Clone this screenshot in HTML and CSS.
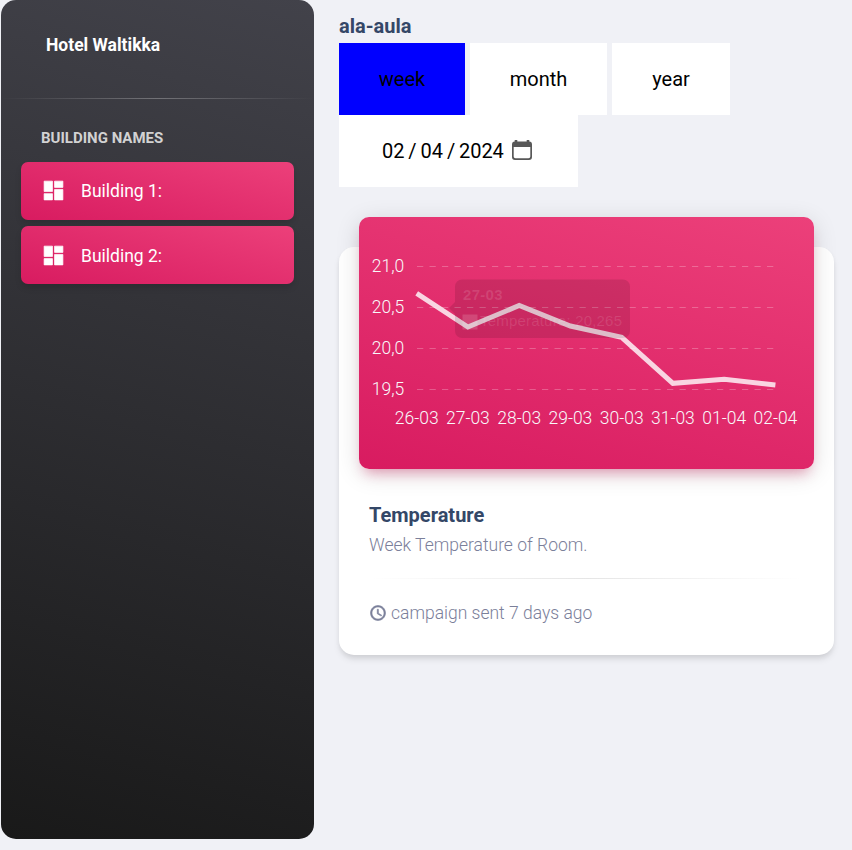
FILE: index.html
```html
<!DOCTYPE html>
<html lang="en">
<head>
<meta charset="utf-8">
<title>Hotel Waltikka</title>
<link rel="stylesheet" href="styles.css">
</head>
<body>
<aside class="sidebar">
  <div class="brand">Hotel Waltikka</div>
  <hr class="rule rule-light">
  <h6 class="nav-title">Building names</h6>
  <nav class="nav">
    <a class="nav-link">
      <svg class="nav-icon" viewBox="0 0 24 24"><path d="M3 13h8V3H3v10zm0 8h8v-6H3v6zm10 0h8V11h-8v10zm0-18v6h8V3h-8z"/></svg>
      <span>Building 1:</span>
    </a>
    <a class="nav-link">
      <svg class="nav-icon" viewBox="0 0 24 24"><path d="M3 13h8V3H3v10zm0 8h8v-6H3v6zm10 0h8V11h-8v10zm0-18v6h8V3h-8z"/></svg>
      <span>Building 2:</span>
    </a>
  </nav>
</aside>
<main class="main">
  <h1 class="room">ala-aula</h1>
  <div class="filters">
    <button class="filter week active">week</button>
    <button class="filter month">month</button>
    <button class="filter year">year</button>
  </div>
  <div class="date">
    <span class="date-text">02&thinsp;/&thinsp;04&thinsp;/&thinsp;2024</span>
    <svg class="date-icon" viewBox="0 0 20 20"><path fill-rule="evenodd" d="M2.700 0h2.600v1.500h9.400V0h2.600v1.500A3 3 0 0 1 20 4.500V17a3 3 0 0 1-3 3H3a3 3 0 0 1-3-3V4.500a3 3 0 0 1 2.700-3zM1.700 7v9.500a1.800 1.800 0 0 0 1.800 1.800h13a1.800 1.800 0 0 0 1.800-1.800V7z"/></svg>
  </div>
  <section class="card">
    <div class="chart">
      <svg width="455" height="252" viewBox="0 0 455 252">
        <g class="grid">
          <path d="M58 49.500H416M58 90.500H416M58 131.500H416M58 172.500H416"/>
        </g>
        <g class="labels y-labels">
          <text x="45.300" y="54.500">21,0</text>
          <text x="45.300" y="95.500">20,5</text>
          <text x="45.300" y="136.500">20,0</text>
          <text x="45.300" y="177.500">19,5</text>
        </g>
        <g class="labels x-labels">
          <text x="57.700" y="207">26-03</text>
          <text x="108.900" y="207">27-03</text>
          <text x="160.200" y="207">28-03</text>
          <text x="211.400" y="207">29-03</text>
          <text x="262.700" y="207">30-03</text>
          <text x="313.900" y="207">31-03</text>
          <text x="365.200" y="207">01-04</text>
          <text x="416.400" y="207">02-04</text>
        </g>
        <polyline class="series" points="57.700,76.300 108.900,110 160.200,88.500 211.400,109 262.700,120.300 313.900,166.300 365.200,162.300 416.400,168"/>
        <g class="tip">
          <path class="tip-box" d="M103 62.500h161a7 7 0 0 1 7 7v44.500a7 7 0 0 1-7 7H103a7 7 0 0 1-7-7V97l-6-6 6-6V69.500a7 7 0 0 1 7-7z"/>
          <rect class="tip-swatch" x="103.500" y="97.500" width="15" height="15"/>
          <text class="tip-title" x="104" y="83" textLength="39.500">27-03</text>
          <text class="tip-text" x="121" y="109" textLength="142">Temperature: 20,265</text>
        </g>
      </svg>
    </div>
    <div class="card-body">
      <h2 class="card-title">Temperature</h2>
      <p class="card-text">Week Temperature of Room.</p>
      <hr class="rule rule-dark">
      <div class="card-foot">
        <svg class="clock" viewBox="0 0 24 24"><path d="M11.990 2C6.470 2 2 6.480 2 12s4.470 10 9.990 10C17.520 22 22 17.520 22 12S17.520 2 11.990 2zM12 20c-4.420 0-8-3.580-8-8s3.580-8 8-8 8 3.580 8 8-3.580 8-8 8zm.5-13H11v6l5.250 3.150.75-1.230-4.500-2.670z"/></svg>
        <span>campaign sent 7 days ago</span>
      </div>
    </div>
  </section>
</main>
</body>
</html>
```
FILE: styles.css
```css
* { box-sizing: border-box; }
body {
  margin: 0;
  height: 850px;
  overflow: hidden;
  display: flex;
  background: #f0f1f6;
  font-family: Roboto, "Liberation Sans", sans-serif;
  font-size: 17.5px;
}
.sidebar {
  width: 313px;
  height: 839px;
  margin-left: 1px;
  flex: none;
  border-radius: 15px;
  background: linear-gradient(195deg, #42424a, #191919);
  color: #fff;
}
.brand {
  height: 98px;
  padding: 35px 0 0 45px;
  line-height: 21px;
  font-weight: 700;
}
.rule { height: 1px; border: 0; margin: 0; }
.rule-light { background: linear-gradient(90deg, transparent, rgba(255,255,255,.28), transparent); }
.rule-dark { background: linear-gradient(90deg, transparent, rgba(0,0,0,.1), transparent); }
.nav-title {
  margin: 29px 0 0 40px;
  font-size: 15px;
  line-height: 20px;
  font-weight: 700;
  text-transform: uppercase;
  color: #d2d2d3;
}
.nav {
  display: grid;
  gap: 6px;
  margin: 14px 20px 0;
}
.nav-link {
  display: flex;
  align-items: center;
  height: 58px;
  padding-left: 20px;
  border-radius: 7px;
  background: linear-gradient(195deg, #ec407a, #d81b60);
  box-shadow: 0 4px 7px -1px rgba(0,0,0,.15);
}
.nav-link + .nav-link { padding-top: 2px; }
.nav-icon {
  width: 25px;
  height: 25px;
  margin: 0 15px 1px 0;
  fill: #fff;
  stroke: #fff;
  stroke-width: .7;
  stroke-linejoin: round;
}
.main { width: 495px; margin-left: 25px; flex: none; }
.room {
  margin: 14px 0 0;
  height: 29px;
  font-size: 20px;
  line-height: 25px;
  font-weight: 700;
  color: #344767;
}
.filters { display: flex; gap: 5px; }
.filter {
  height: 72px;
  padding: 0;
  border: 0;
  background: #fff;
  color: #000;
  font: 400 20px/24px Roboto, sans-serif;
}
.filter.active { background: #00f; }
.week { width: 126px; }
.month { width: 137px; }
.year { width: 118px; }
.date {
  display: flex;
  align-items: center;
  width: 239px;
  height: 72px;
  padding-left: 43px;
  background: #fff;
  color: #000;
  font-size: 20px;
}
.date-text { width: 130px; white-space: nowrap; letter-spacing: -.07px; }
.date-icon { width: 20px; height: 20px; fill: #585858; margin-bottom: 2px; }
.card {
  height: 408px;
  margin-top: 60px;
  padding: 0 20px;
  border-radius: 15px;
  background: #fff;
  box-shadow: 0 5px 7.5px -1px rgba(0,0,0,.1), 0 2.5px 5px -1px rgba(0,0,0,.06);
  display: flow-root;
}
.chart {
  height: 252px;
  margin-top: -30px;
  border-radius: 10px;
  background: linear-gradient(195deg, #ec407a, #d81b60);
  box-shadow: 0 5px 25px rgba(0,0,0,.14), 0 9px 12.5px -6px rgba(233,30,99,.4);
}
.chart svg { display: block; }
.grid path { fill: none; stroke: rgba(255,255,255,.25); stroke-dasharray: 6.250 6.250; }
.labels { fill: #f8f9fa; font-size: 17.5px; font-weight: 300; }
.y-labels { text-anchor: end; }
.x-labels { text-anchor: middle; }
.series { fill: none; stroke: rgba(255,255,255,.8); stroke-width: 5; }
.tip-box { fill: #000; fill-opacity: .11; }
.tip-swatch { fill: #fff; fill-opacity: .15; }
.tip text { fill: #fff; fill-opacity: .12; font-family: "Liberation Sans", sans-serif; font-size: 15px; }
.tip .tip-title { font-weight: 700; }
.card-body { padding: 33px 10px 0; }
.card-title {
  margin: 0;
  font-size: 20px;
  line-height: 26px;
  font-weight: 700;
  color: #344767;
}
.card-text {
  margin: 4px 0 19px;
  line-height: 27px;
  font-weight: 300;
  color: #7b809a;
}
.card-foot {
  display: flex;
  align-items: center;
  margin-top: 21px;
  line-height: 27px;
  font-weight: 300;
  color: #7b809a;
}
.clock {
  width: 18px;
  height: 18px;
  margin: 0 4px 2px 0;
  fill: #7b809a;
  stroke: #7b809a;
  stroke-width: .8;
}
```
